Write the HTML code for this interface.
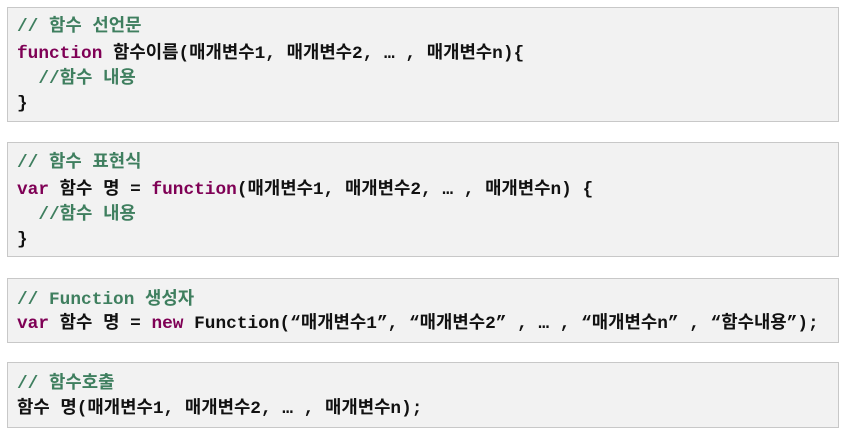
<!DOCTYPE html>
<html><head><meta charset="utf-8"><style>
body{margin:0;background:#fff;width:847px;height:432px;position:relative;overflow:hidden}
.b{position:absolute;left:7px;width:832px;background:#f2f2f2;border:1px solid #c8c8c8;box-sizing:border-box}
.l{position:absolute;left:9px;white-space:pre;font:bold 17.8px "Liberation Mono","Noto Sans CJK KR",monospace;color:#111;line-height:20px}
.c{color:#3f7f5f}.k{color:#7f0055}
</style></head><body>
<div class="b" style="top:7px;height:115px">
<div class="l c" style="top:9px">// 함수 선언문</div>
<div class="l" style="top:36px"><span class="k">function</span> 함수이름(매개변수1, 매개변수2, … , 매개변수n){</div>
<div class="l c" style="top:61px">  //함수 내용</div>
<div class="l" style="top:86px">}</div>
</div>
<div class="b" style="top:142px;height:115px">
<div class="l c" style="top:10px">// 함수 표현식</div>
<div class="l" style="top:37px"><span class="k">var</span> 함수 명 = <span class="k">function</span>(매개변수1, 매개변수2, … , 매개변수n) {</div>
<div class="l c" style="top:62px">  //함수 내용</div>
<div class="l" style="top:87px">}</div>
</div>
<div class="b" style="top:278px;height:65px">
<div class="l c" style="top:11px">// Function 생성자</div>
<div class="l" style="top:35px"><span class="k">var</span> 함수 명 = <span class="k">new</span> Function(“매개변수1”, “매개변수2” , … , “매개변수n” , “함수내용”);</div>
</div>
<div class="b" style="top:362px;height:66px">
<div class="l c" style="top:11px">// 함수호출</div>
<div class="l" style="top:36px">함수 명(매개변수1, 매개변수2, … , 매개변수n);</div>
</div>
</body></html>
